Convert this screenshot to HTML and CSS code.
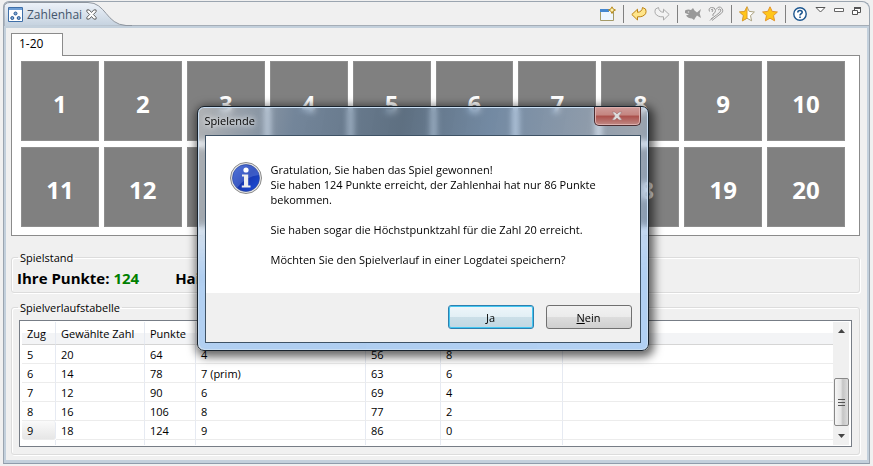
FILE: index.html
```html
<!DOCTYPE html>
<html lang="de">
<head>
<meta charset="utf-8">
<title>Zahlenhai</title>
<link rel="stylesheet" href="styles.css">
</head>
<body>
<main class="view">
  <header class="bar">
    <div class="view-tab">
      <svg class="tab-shape" viewBox="0 0 128 24" preserveAspectRatio="none" aria-hidden="true">
        <defs><linearGradient id="tabFill" x1="0" y1="0" x2="0" y2="1"><stop offset="0" stop-color="#edf2f9"/><stop offset="1" stop-color="#c5d2df"/></linearGradient></defs>
        <path d="M0 24V6Q0 .5 6 .5H84C102 .5 102 22.500 122 23.500H128" fill="url(#tabFill)" stroke="#8f969f"/>
      </svg>
      <div class="tab-content">
        <svg width="15" height="15" viewBox="0 0 15 15" aria-hidden="true"><path d="M.5.500H14.500V14.500H.5Z" fill="#fff" stroke="#3f6fa8"/><path d="M1 1H14V3H1Z" fill="#6f9fd6"/><g fill="#7fa8d8" stroke="#26568f"><circle cx="7.500" cy="6.500" r="1.500"/><circle cx="4.300" cy="11" r="1.500"/><circle cx="10.700" cy="11" r="1.500"/></g></svg>
        <span class="tab-title">Zahlenhai</span>
        <button class="icon" aria-label="Schließen"><svg width="11" height="11" viewBox="0 0 12 12"><path d="M1 1H3.500L6 3.800L8.500 1H11V3L8 6L11 9V11H8.500L6 8.200L3.500 11H1V9L4 6L1 3Z" fill="#fff" stroke="#555"/></svg></button>
      </div>
    </div>
    <div class="tools">
      <button class="icon" aria-label="Neues Spiel"><svg width="16" height="16" viewBox="0 0 16 16"><path d="M.5 3.500H13.500V14.500H.5Z" fill="#eef6ff" stroke="#a39a68"/><path d="M0 3H9V6H0Z" fill="#4587cf"/><path d="M12 .8L13.200 3L15.500 4L13.200 5L12 7.500L10.800 5L8.500 4L10.800 3Z" fill="#fff3b0" stroke="#b88a1f"/></svg></button>
      <i class="sep"></i>
      <button class="icon" aria-label="Rückgängig"><svg width="16" height="16" viewBox="0 0 16 16"><path d="M.8 8.500L6.500 3.200V6.300Q11 6 11.500 1.500L14.500 3Q16.500 8 11.500 10.200Q9.500 11 6.500 10.800V14Z" fill="#ffe58a" stroke="#bd8415"/></svg></button>
      <button class="icon" aria-label="Wiederholen"><svg width="16" height="16" viewBox="0 0 16 16"><path d="M15.200 8.500L9.500 3.200V6.300Q5 6 4.500 1.500L1.500 3Q-.5 8 4.500 10.200Q6.500 11 9.500 10.800V14Z" fill="#f3f3f3" stroke="#aaa"/></svg></button>
      <i class="sep"></i>
      <button class="icon" aria-label="Hai"><svg width="16" height="16" viewBox="0 0 16 16"><path d="M0 4.500Q3 3 6 4L8 2L9.500 4.500L12 6.500L16 3L14.700 7.500L16 12L12 9.500L10.500 11.500L9 14L7 12.500Q3 12.500 1 9.500L4 8.500L0 7Z" fill="#999"/><circle cx="3.500" cy="6" r=".8" fill="#ddd"/></svg></button>
      <button class="icon" aria-label="Hinweis"><svg width="16" height="16" viewBox="0 0 16 16" fill="none" stroke="#999"><path d="M1.500 5.500Q0 2 3.500 1.500Q7 1 7.500 4.500Q7.500 7 5 8V10M3 4Q4 2.500 5 4L4 6M8 3.500Q11-1 14 2.500Q16.500 6 11 9L4 14.500M10 4Q12 2 13 4Q13 6 8.500 9L3 13M5 11.500L2 14.500"/></svg></button>
      <i class="sep"></i>
      <button class="icon" aria-label="Halber Stern"><svg width="16" height="16" viewBox="0 0 16 16"><path d="M8 .8L10.200 5.400L15.400 6L11.500 9.600L12.600 14.800L8 12.200L3.400 14.800L4.500 9.600L.6 6L5.800 5.400Z" fill="#fff" stroke="#aaa17f"/><path d="M8 .8V12.200L3.400 14.800L4.500 9.600L.6 6L5.800 5.400Z" fill="#ffc61a" stroke="#e2a02a"/></svg></button>
      <button class="icon" aria-label="Stern"><svg width="16" height="16" viewBox="0 0 16 16"><path d="M8 .8L10.200 5.400L15.400 6L11.500 9.600L12.600 14.800L8 12.200L3.400 14.800L4.500 9.600L.6 6L5.800 5.400Z" fill="#ffc61a" stroke="#e2942a"/></svg></button>
      <i class="sep"></i>
      <button class="icon help" aria-label="Hilfe"><svg width="14" height="14" viewBox="0 0 14 14"><circle cx="7" cy="7" r="6.200" fill="#fff" stroke="#1c568f" stroke-width="1.400"/><path d="M4.800 5.500Q4.800 3.500 7 3.500Q9.200 3.500 9.200 5.200Q9.200 6.200 7.800 7Q7 7.500 7 8.500M7 9.500V11" fill="none" stroke="#1c568f" stroke-width="1.600"/></svg></button>
      <div class="window-tools">
        <button class="icon" aria-label="Menü"><svg width="11" height="6" viewBox="0 0 11 6"><path d="M1 .5H10L5.500 5Z" fill="#fff" stroke="#555"/></svg></button>
        <button class="icon" aria-label="Minimieren"><svg width="10" height="6" viewBox="0 0 10 6"><path d="M.5 1.500H9.500V4.500H.5Z" fill="#fff" stroke="#666"/></svg></button>
        <button class="icon" aria-label="Wiederherstellen"><svg width="9" height="8" viewBox="0 0 9 8"><path d="M2.500 1H8.500V5.500H2.500Z" fill="#fff" stroke="#555"/><path d="M2 1H9" stroke="#555" stroke-width="2"/><path d="M.5 3.500H5.500V7.500H.5Z" fill="#fff" stroke="#555"/></svg></button>
      </div>
    </div>
  </header>
  <div class="content">
    <button class="page-tab">1-20</button>
    <section class="board">
      <button>1</button><button>2</button><button>3</button><button>4</button><button>5</button><button>6</button><button>7</button><button>8</button><button>9</button><button>10</button>
      <button>11</button><button>12</button><button>13</button><button>14</button><button>15</button><button>16</button><button>17</button><button>18</button><button>19</button><button>20</button>
    </section>
    <fieldset class="score">
      <legend>Spielstand</legend>
      <span>Ihre Punkte: <b class="won">124</b></span><span>Hai-Punkte: 86</span>
    </fieldset>
    <fieldset class="history">
      <legend>Spielverlaufstabelle</legend>
      <div class="table-box">
        <div class="rows">
        <table>
          <colgroup><col class="c1"><col class="c2"><col class="c3"><col class="c4"><col class="c5"><col class="c6"><col></colgroup>
          <thead><tr><th>Zug</th><th>Gewählte Zahl</th><th>Punkte</th><th></th><th></th><th></th><th></th></tr></thead>
          <tbody>
            <tr><td>5</td><td>20</td><td>64</td><td>4</td><td>56</td><td>8</td><td></td></tr>
            <tr><td>6</td><td>14</td><td>78</td><td>7 (prim)</td><td>63</td><td>6</td><td></td></tr>
            <tr><td>7</td><td>12</td><td>90</td><td>6</td><td>69</td><td>4</td><td></td></tr>
            <tr><td>8</td><td>16</td><td>106</td><td>8</td><td>77</td><td>2</td><td></td></tr>
            <tr><td class="current">9</td><td>18</td><td>124</td><td>9</td><td>86</td><td>0</td><td></td></tr>
            <tr><td></td><td></td><td></td><td></td><td></td><td></td><td></td></tr>
          </tbody>
        </table>
        </div>
        <div class="scroll" aria-hidden="true">
          <svg width="7" height="4" viewBox="0 0 7 4"><path d="M0 4L3.500 0L7 4Z" fill="#444"/></svg>
          <i class="track"></i>
          <div class="thumb"><i></i><i></i><i></i></div>
          <svg class="down" width="7" height="4" viewBox="0 0 7 4"><path d="M0 0L3.500 4L7 0Z" fill="#444"/></svg>
        </div>
      </div>
    </fieldset>
  </div>
</main>
<div class="dialog" role="dialog" aria-labelledby="dialogTitle">
  <div class="title-bar"><span id="dialogTitle">Spielende</span>
    <button class="close" aria-label="Schließen"><svg width="12" height="10" viewBox="0 0 12 10"><path d="M1 1H4L6 3L8 1H11L8 5L11 9H8L6 7L4 9H1L4 5Z" fill="#ddd" stroke="#a77b7b" stroke-width=".7"/></svg></button>
  </div>
  <div class="dialog-body">
    <div class="message">
      <svg width="32" height="32" viewBox="0 0 32 32" aria-hidden="true">
        <defs><linearGradient id="infoFill" x1="0" y1="0" x2="1" y2="1"><stop offset="0" stop-color="#3b62d2"/><stop offset=".5" stop-color="#1836ae"/><stop offset="1" stop-color="#1c50dc"/></linearGradient></defs>
        <circle cx="16" cy="16" r="15.500" fill="#e6e6e6" stroke="#8b8b8b"/><circle cx="16" cy="16" r="13.500" fill="url(#infoFill)" stroke="#274192" stroke-width=".6"/><path d="M3 17Q3 4 16 3Q28 4 29 13Q16 14 7 26Q3 22 3 17Z" fill="#7d9ae8" opacity=".35"/>
        <circle cx="16" cy="8" r="2.600" fill="#fff"/><path d="M12 12.500H18.200V23.500H20.500V25.500H11.800V23.500H14V14.500H12Z" fill="#eee"/>
      </svg>
      <p>Gratulation, Sie haben das Spiel gewonnen!<br>Sie haben 124 Punkte erreicht, der Zahlenhai hat nur 86 Punkte<br>bekommen.<br><br>Sie haben sogar die Höchstpunktzahl für die Zahl 20 erreicht.<br><br>Möchten Sie den Spielverlauf in einer Logdatei speichern?</p>
    </div>
    <div class="actions"><button class="default"><span><u>J</u>a</span></button><button><span><u>N</u>ein</span></button></div>
  </div>
</div>
</body>
</html>
```
FILE: styles.css
```css
* { box-sizing: border-box; }
body { margin: 0; min-height: 100vh; padding: 1px 3px 0; background: #f0f0f0; font: 11px/15px "Open Sans", "Noto Sans", sans-serif; color: #000; overflow: hidden; }
button { font: inherit; color: inherit; }
.view { display: flex; flex-direction: column; height: calc(100vh - 3px); border: 1px solid #9ba5b0; border-bottom-color: #8e9cab; border-radius: 6px 8px 0 0; background: #c3d0dc; }
.bar { display: flex; justify-content: space-between; height: 24px; flex: none; background: #f0f0f0; border-bottom: 1px solid #a5adb6; border-radius: 6px 8px 0 0; }
.view-tab { position: relative; width: 128px; height: 24px; }
.tab-shape { position: absolute; inset: 0; width: 100%; height: 100%; }
.tab-content { position: relative; display: flex; align-items: center; gap: 4px; height: 100%; padding-left: 4px; color: #44566c; }
.tab-title { font-size: 12px; }
.icon { display: flex; padding: 0; border: 0; background: none; }
.tools { display: flex; align-items: center; gap: 7px; padding-right: 8px; }
.sep { width: 1px; height: 18px; background: #808080; }
.window-tools { display: flex; gap: 8px; height: 14px; padding-left: 1px; }
.content { flex: 1; display: flex; flex-direction: column; align-items: stretch; margin: 2px 2px 3px; padding: 5px 7px 5px 5px; background: #f0f0f0; }
.page-tab { position: relative; z-index: 1; flex: none; width: 52px; height: 23px; margin-bottom: -1px; padding: 0 0 4px 7px; border: 1px solid #8b8b8b; border-bottom: 0; background: #fff; text-align: left; font-size: 12px; }
.board { display: grid; grid-template-columns: repeat(10, 1fr); gap: 6px 5px; padding: 5px 14px 8px 9px; border: 1px solid #8b8b8b; background: #fff; }
.board button { height: 80px; padding: 4px 0 0; border: 1px solid #8e8e8e; background: #808080; color: #fff; font-size: 24px; font-weight: 700; }
fieldset { min-width: 0; margin: 0; border: 1px solid #dcdcdc; border-radius: 3px; box-shadow: inset 1px 1px #fff, 1px 1px #fff; }
legend { padding: 0 2px; }
.score { display: flex; gap: 36px; height: 43px; margin-top: 14px; padding: 3px 5px; font-size: 15px; font-weight: 700; line-height: 20px; }
.score legend, .history legend { margin-left: 1px; font-size: 11px; line-height: 15px; font-weight: 400; }
.history legend { margin-left: -1px; }
.won { color: #008000; font-weight: 700; }
.history { margin-top: 7px; padding: 5px 7px 7px; }
.table-box { display: flex; height: 127px; padding: 1px 2px; border: 1px solid #777d86; background: #fff; }
.rows { flex: 1; overflow: hidden; }
table { width: 100%; table-layout: fixed; border-collapse: separate; border-spacing: 0; }
.c1 { width: 34px; } .c2 { width: 89px; } .c3 { width: 51px; } .c4 { width: 170px; } .c5 { width: 75px; } .c6 { width: 122px; }
th, td { padding: 0 0 0 5px; border-right: 1px solid #e6eaf2; border-bottom: 1px solid #ececec; text-align: left; font-weight: 400; white-space: nowrap; }
th:last-child, td:last-child { border-right: 0; }
th { height: 23px; background: linear-gradient(#fff 50%, #f3f4f6 50%); border-bottom-color: #d5d5d5; }
td { height: 19px; }
.current { background: linear-gradient(#fafafa, #e6e6e6); border-radius: 3px; }
.scroll { display: flex; flex-direction: column; align-items: center; width: 16px; padding: 7px 0; background: #f0f0f0; }
.track { flex: 1; }
.thumb { display: flex; flex-direction: column; justify-content: center; align-items: center; gap: 2px; width: 15px; height: 48px; margin-bottom: 8px; border: 1px solid #888; border-radius: 2px; background: linear-gradient(90deg, #f6f6f6, #e4e4e4 45%, #c5c5c5 60%, #ddd); }
.thumb i { width: 7px; height: 1px; background: #555; }
.dialog { position: absolute; left: 50%; top: 106px; width: 452px; margin-left: -240px; padding: 0 7px 7px; border: 1px solid #18222c; border-radius: 7px; background: linear-gradient(100deg, rgba(235,240,245,.45), rgba(100,140,185,.45) 20%, rgba(60,95,130,.5) 42%, rgba(100,150,205,.45) 60%, rgba(200,220,245,.4) 90%, rgba(112,170,236,.5)); backdrop-filter: blur(3px); box-shadow: inset 0 0 0 1px #c9def3, 2px 3px 10px 3px rgba(0,0,0,.6); }
.dialog::before { content: ""; position: absolute; inset: 110px 1px 1px; border-radius: 6px; background: linear-gradient(rgba(176,207,242,0), rgba(176,207,242,.95) 45%); z-index: -1; }
.title-bar { display: flex; justify-content: space-between; height: 28px; line-height: 28px; text-shadow: 0 0 5px #fff, 0 0 8px #fff; }
.close { display: flex; justify-content: center; align-items: center; width: 47px; height: 19px; padding: 0; border: 1px solid #4a2c30; border-top: 0; border-radius: 0 0 5px 5px; background: linear-gradient(#cf9c9a, #c48580 45%, #ab4f4a 50%, #c08a86); box-shadow: inset 0 0 0 1px #ddb0ae; }
.dialog-body { border: 1px solid #3e5265; background: #f0f0f0; }
.message { display: flex; gap: 9px; height: 157px; padding: 26px 24px; background: #fff; }
.message p { margin: 0; white-space: nowrap; }
.actions { display: flex; justify-content: flex-end; gap: 12px; padding: 12px 8px 13px; }
.actions button { width: 86px; height: 24px; padding: 0; border: 1px solid #707070; border-radius: 3px; background: linear-gradient(#f2f2f2, #ebebeb 50%, #ddd 50%, #cfcfcf); }
.actions .default { border-color: #2f7fae; background: linear-gradient(#eef6fa, #e2eff5 50%, #cbdfe8 50%, #c2d7e2); box-shadow: inset 0 0 0 1px #43c7f2; }
```
